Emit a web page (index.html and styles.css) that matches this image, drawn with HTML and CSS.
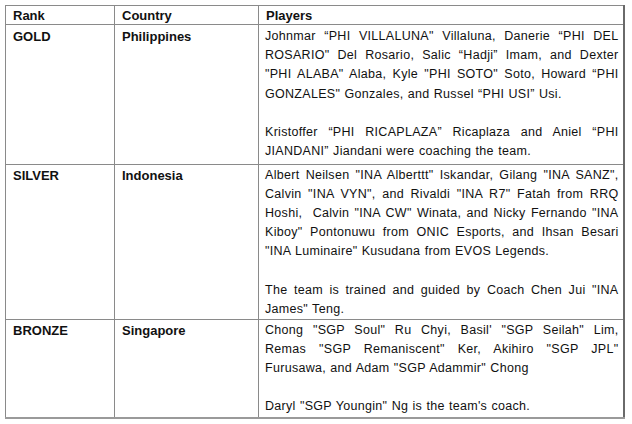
FILE: index.html
```html
<!DOCTYPE html>
<html>
<head>
<meta charset="utf-8">
<link rel="stylesheet" href="styles.css">
</head>
<body>
<table class="medals">
  <colgroup>
    <col class="c-rank">
    <col class="c-country">
    <col class="c-players">
  </colgroup>
  <thead>
    <tr class="head">
      <th>Rank</th>
      <th>Country</th>
      <th>Players</th>
    </tr>
  </thead>
  <tbody>
    <tr class="r-gold">
      <td class="b">GOLD</td>
      <td class="b">Philippines</td>
      <td class="players">
        <p>
          <span class="ln">Johnmar “PHI VILLALUNA" Villaluna, Danerie “PHI DEL</span>
          <span class="ln">ROSARIO" Del Rosario, Salic “Hadji” Imam, and Dexter</span>
          <span class="ln">"PHI ALABA" Alaba, Kyle "PHI SOTO" Soto, Howard “PHI</span>
          <span class="ln end">GONZALES" Gonzales, and Russel “PHI USI” Usi.</span>
        </p>
        <p>
          <span class="ln">Kristoffer “PHI RICAPLAZA” Ricaplaza and Aniel “PHI</span>
          <span class="ln end">JIANDANI” Jiandani were coaching the team.</span>
        </p>
      </td>
    </tr>
    <tr class="r-silver">
      <td class="b">SILVER</td>
      <td class="b">Indonesia</td>
      <td class="players">
        <p>
          <span class="ln">Albert Neilsen "INA Alberttt" Iskandar, Gilang "INA SANZ",</span>
          <span class="ln">Calvin "INA VYN", and Rivaldi "INA R7" Fatah from RRQ</span>
          <span class="ln">Hoshi,&nbsp; Calvin "INA CW" Winata, and Nicky Fernando "INA</span>
          <span class="ln">Kiboy" Pontonuwu from ONIC Esports, and Ihsan Besari</span>
          <span class="ln end">"INA Luminaire" Kusudana from EVOS Legends.</span>
        </p>
        <p>
          <span class="ln">The team is trained and guided by Coach Chen Jui "INA</span>
          <span class="ln end">James" Teng.</span>
        </p>
      </td>
    </tr>
    <tr class="r-bronze">
      <td class="b">BRONZE</td>
      <td class="b">Singapore</td>
      <td class="players">
        <p>
          <span class="ln">Chong "SGP Soul" Ru Chyi, Basil' "SGP Seilah" Lim,</span>
          <span class="ln">Remas "SGP Remaniscent" Ker, Akihiro "SGP JPL"</span>
          <span class="ln end">Furusawa, and Adam "SGP Adammir" Chong</span>
        </p>
        <p>
          <span class="ln end">Daryl "SGP Youngin" Ng is the team's coach.</span>
        </p>
      </td>
    </tr>
  </tbody>
</table>
</body>
</html>
```

FILE: styles.css
```css
html, body {
  margin: 0;
  padding: 0;
  background: #ffffff;
}
body {
  padding: 5px 0 0 5px;
  font-family: "Liberation Sans", Arial, sans-serif;
  font-size: 13px;
  color: #111111;
}
.medals {
  border-collapse: collapse;
  width: 618px;
  table-layout: fixed;
}
.c-rank { width: 109px; }
.c-country { width: 144px; }
.c-players { width: 365px; }
.medals th,
.medals td {
  border: 1px solid #8a8a8a;
  vertical-align: top;
  text-align: left;
  padding: 0.5px 4px 0 7px;
  line-height: 19.2px;
}
.medals th {
  font-weight: bold;
  line-height: 16px;
  padding-top: 1.5px;
}
.head { height: 19px; }
.r-gold { height: 140px; }
.r-gold td { padding-top: 2px; }
.r-silver { height: 155px; }
.r-bronze { height: 96px; }
.medals tr > :last-child {
  border-right: 2px solid #6a6a6a;
}
.medals tbody tr:last-child td {
  border-bottom: 2px solid #9a9a9a;
}
.medals td.players {
  padding-left: 6px;
  font-size: 12.5px;
  letter-spacing: 0.3px;
  word-spacing: 0.5px;
}
.b {
  font-weight: bold;
}
.players p {
  margin: 0;
}
.players p + p {
  margin-top: 19.2px;
}
.ln {
  display: block;
  text-align: justify;
  text-align-last: justify;
}
.ln.end {
  text-align-last: left;
}
```
